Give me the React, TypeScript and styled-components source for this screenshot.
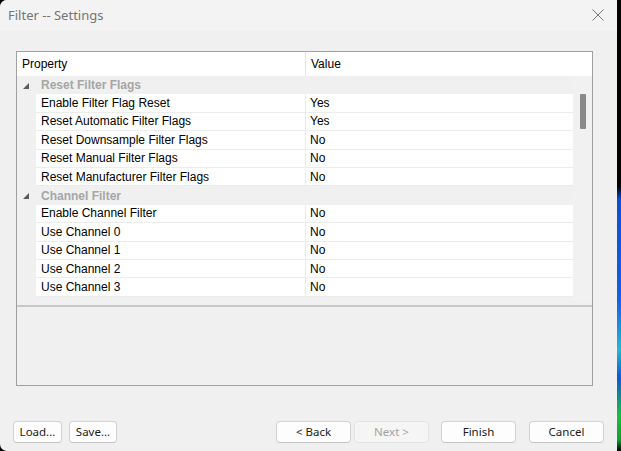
import React from "react";
import styled, { createGlobalStyle } from "styled-components";

const GlobalStyle = createGlobalStyle`
  html, body {
    margin: 0;
    padding: 0;
    background: #000;
  }
  #root {
    width: 621px;
    height: 451px;
  }
`;

const colorList = {
  window: "#f0f0f0",
  title: "#f3f3f3",
  border: "#a0a0a0",
  line: "#ececec",
  text: "#000000",
  category: "#a6a6a6",
  thumb: "#8a8a8a",
};

interface PropertyItem {
  name: string;
  value: string;
}
interface PropertyGroup {
  title: string;
  items: PropertyItem[];
}

const groups: PropertyGroup[] = [
  {
    title: "Reset Filter Flags",
    items: [
      { name: "Enable Filter Flag Reset", value: "Yes" },
      { name: "Reset Automatic Filter Flags", value: "Yes" },
      { name: "Reset Downsample Filter Flags", value: "No" },
      { name: "Reset Manual Filter Flags", value: "No" },
      { name: "Reset Manufacturer Filter Flags", value: "No" },
    ],
  },
  {
    title: "Channel Filter",
    items: [
      { name: "Enable Channel Filter", value: "No" },
      { name: "Use Channel 0", value: "No" },
      { name: "Use Channel 1", value: "No" },
      { name: "Use Channel 2", value: "No" },
      { name: "Use Channel 3", value: "No" },
    ],
  },
];

// #region Window
const Screen = styled.div`
  display: flex;
  flex-direction: row;
  width: 621px;
  height: 451px;
  overflow: hidden;
`;
const Dialog = styled.div`
  display: flex;
  flex-direction: column;
  width: 617px;
  height: 100%;
  background: ${colorList.window};
  border-radius: 7px 0 0 7px;
  overflow: hidden;
`;
const Desktop = styled.div`
  flex: 1;
  background: linear-gradient(
    to bottom,
    #000 0,
    #000 186px,
    #0b4fd6 200px,
    #1460e8 300px,
    #2ab6d2 350px,
    #0b58d4 378px,
    #1fbf3f 415px,
    #0fa030 440px,
    #000 451px
  );
`;
const TitleBar = styled.div`
  display: flex;
  align-items: center;
  justify-content: space-between;
  height: 29px;
  padding: 0 12px 2px 8px;
  background: ${colorList.title};
`;
const TitleText = styled.span`
  font-family: "Noto Sans", "Open Sans", sans-serif;
  font-size: 13px;
  color: #757575;
`;
const CloseButton = styled.div`
  display: flex;
  align-items: center;
  justify-content: center;
  width: 14px;
  height: 14px;
`;
const Content = styled.div`
  display: flex;
  flex-direction: column;
  padding: 20px 24px 0 16px;
`;
// #endregion

// #region PropertyGrid
const PropertyPanel = styled.div`
  display: flex;
  flex-direction: column;
  height: 335px;
  box-sizing: border-box;
  border: 1px solid ${colorList.border};
  background: ${colorList.window};
  font-family: "Liberation Sans", Arial, sans-serif;
  font-size: 12px;
  color: ${colorList.text};
`;
const GridArea = styled.div`
  display: flex;
  flex-direction: column;
  height: 252px;
`;
const HeaderRow = styled.div`
  display: flex;
  height: 24px;
  background: #fff;
`;
const HeaderCell = styled.div<{ $width?: number }>`
  display: flex;
  align-items: center;
  box-sizing: border-box;
  padding-left: 5px;
  width: ${(props) => (props.$width ? `${props.$width}px` : "auto")};
  flex: ${(props) => (props.$width ? "none" : 1)};
  border-right: ${(props) => (props.$width ? "1px solid #e6e6e6" : "none")};
`;
const GridBody = styled.div`
  display: flex;
  flex: 1;
  min-height: 0;
`;
const RowList = styled.div`
  display: flex;
  flex-direction: column;
  flex: 1;
`;
const CategoryRow = styled.div`
  display: flex;
  align-items: center;
  height: 18.4px;
  background: ${colorList.window};
`;
const Gutter = styled.div`
  display: flex;
  align-items: center;
  justify-content: center;
  width: 19px;
  height: 100%;
  flex: none;
  background: ${colorList.window};
`;
const Expander = styled.div`
  width: 0;
  height: 0;
  margin-left: -2px;
  margin-top: 1px;
  border-left: 6px solid transparent;
  border-bottom: 6px solid #5a5a5a;
`;
const CategoryText = styled.span`
  padding-left: 5px;
  font-weight: 700;
  color: ${colorList.category};
`;
const PropertyRow = styled.div`
  display: flex;
  height: 18.4px;
`;
const NameCell = styled.div`
  display: flex;
  align-items: center;
  width: 270px;
  padding-left: 5px;
  box-sizing: border-box;
  background: #fff;
  border-bottom: 1px solid ${colorList.line};
  border-right: 1px solid ${colorList.line};
  flex: none;
`;
const ValueCell = styled.div`
  display: flex;
  align-items: center;
  flex: 1;
  padding-left: 4px;
  background: #fff;
  border-bottom: 1px solid ${colorList.line};
`;
const ScrollTrack = styled.div`
  width: 19px;
  flex: none;
  height: 224px;
  background: #f1f1f1;
  box-sizing: border-box;
  padding: 18px 0 0 7px;
`;
const ScrollThumb = styled.div`
  width: 6px;
  height: 35px;
  border-radius: 1px;
  background: ${colorList.thumb};
`;
const Splitter = styled.div`
  height: 2px;
  margin-top: 1px;
  background: #c8c8c8;
`;
const DescriptionPane = styled.div`
  flex: 1;
`;
// #endregion

// #region Buttons
const ButtonBar = styled.div`
  display: flex;
  justify-content: space-between;
  align-items: center;
  margin-top: auto;
  padding: 0 13px 8px 13px;
`;
const ButtonGroup = styled.div`
  display: flex;
  align-items: center;
  gap: 7px;
`;
const WizardGroup = styled.div`
  display: flex;
  align-items: center;
`;
const DialogButton = styled.button<{ $width?: number; $gap?: number }>`
  height: 22px;
  width: ${(props) => (props.$width ? `${props.$width}px` : "75px")};
  margin-left: ${(props) => (props.$gap ? `${props.$gap}px` : "0")};
  padding: 0 0 1px 0;
  box-sizing: border-box;
  border: 1px solid #d2d2d2;
  border-bottom-color: #c4c4c4;
  border-radius: 4px;
  background: #fdfdfd;
  font-family: "Noto Sans", "Open Sans", sans-serif;
  font-size: 11.5px;
  color: #1b1b1b;

  &:disabled {
    background: #f5f5f5;
    border-color: #e3e3e3;
    color: #a2a2a2;
  }
`;
// #endregion

export default function App() {
  return (
    <>
      <GlobalStyle />
      <Screen>
        <Dialog>
          <TitleBar>
            <TitleText>Filter -- Settings</TitleText>
            <CloseButton>
              <svg width="12" height="12" viewBox="0 0 12 12">
                <path d="M0.5 0.5 L11.5 11.5 M11.5 0.5 L0.5 11.5" stroke="#7a7a7a" strokeWidth="1" fill="none" />
              </svg>
            </CloseButton>
          </TitleBar>
          <Content>
            <PropertyPanel>
              <GridArea>
                <HeaderRow>
                  <HeaderCell $width={289}>Property</HeaderCell>
                  <HeaderCell>Value</HeaderCell>
                </HeaderRow>
                <GridBody>
                  <RowList>
                    {groups.map((group) => (
                      <React.Fragment key={group.title}>
                        <CategoryRow>
                          <Gutter>
                            <Expander />
                          </Gutter>
                          <CategoryText>{group.title}</CategoryText>
                        </CategoryRow>
                        {group.items.map((item) => (
                          <PropertyRow key={item.name}>
                            <Gutter />
                            <NameCell>{item.name}</NameCell>
                            <ValueCell>{item.value}</ValueCell>
                          </PropertyRow>
                        ))}
                      </React.Fragment>
                    ))}
                  </RowList>
                  <ScrollTrack>
                    <ScrollThumb />
                  </ScrollTrack>
                </GridBody>
              </GridArea>
              <Splitter />
              <DescriptionPane />
            </PropertyPanel>
          </Content>
          <ButtonBar>
            <ButtonGroup>
              <DialogButton $width={49}>Load...</DialogButton>
              <DialogButton $width={48}>Save...</DialogButton>
            </ButtonGroup>
            <WizardGroup>
              <DialogButton>&lt; Back</DialogButton>
              <DialogButton $gap={3} disabled>Next &gt;</DialogButton>
              <DialogButton $gap={12}>Finish</DialogButton>
              <DialogButton $gap={13}>Cancel</DialogButton>
            </WizardGroup>
          </ButtonBar>
        </Dialog>
        <Desktop />
      </Screen>
    </>
  );
}
